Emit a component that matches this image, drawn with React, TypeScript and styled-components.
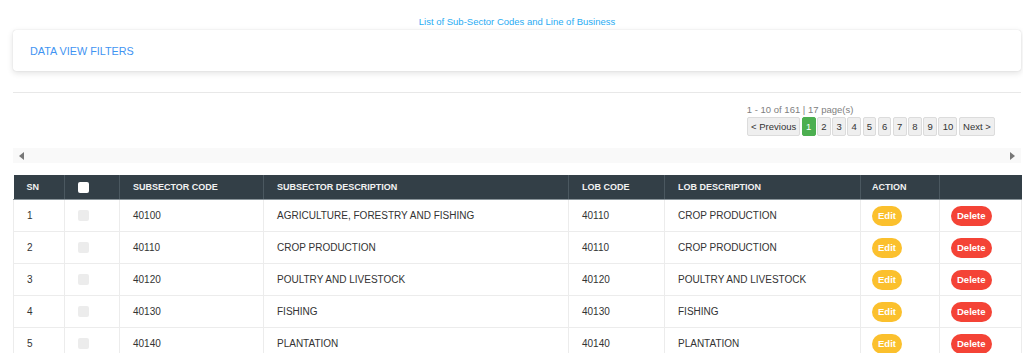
import React, { ReactElement } from "react";
import styled, { createGlobalStyle, css } from "styled-components";

const GlobalStyle = createGlobalStyle`
  html, body {
    margin: 0;
    padding: 0;
    background: #fff;
    overflow: hidden;
    font-family: "Liberation Sans", Arial, sans-serif;
  }
`;

const Page = styled.div`
  padding: 16px 2px 0 13px;
`;

const Title = styled.div`
  text-align: center;
  font-size: 9.5px;
  line-height: 11px;
  color: #29abf3;
  margin-bottom: 3px;
`;

const FilterCard = styled.div`
  height: 41px;
  display: flex;
  align-items: center;
  padding-left: 17px;
  border-radius: 3px;
  background: #fff;
  box-shadow: 0 2px 6px rgba(0, 0, 0, 0.12), 0 0 1px rgba(0, 0, 0, 0.2);
  color: #3f94f2;
  font-size: 10.8px;
`;

const Divider = styled.hr`
  margin: 21px 0 0;
  border: 0;
  border-top: 1px solid #e8e8e8;
`;

const PagerWrap = styled.div`
  display: flex;
  justify-content: flex-end;
  padding-right: 26px;
  margin-top: 11px;
`;

const Pager = styled.div`
  display: flex;
  flex-direction: column;
`;

const PageInfo = styled.div`
  font-size: 9.5px;
  line-height: 11px;
  color: #808080;
`;

const PageButtons = styled.div`
  display: flex;
  gap: 1.5px;
  margin-top: 2px;
`;

const PageButton = styled.button<{ $active?: boolean }>`
  height: 19px;
  padding: 0 3.2px;
  border: 1px solid #dcdcdc;
  border-radius: 2px;
  font-family: inherit;
  font-size: 9.5px;
  color: #333;
  background: #efefef;
  cursor: pointer;

  ${(p) =>
    p.$active &&
    css`
      background: #4caf50;
      border-color: #4caf50;
      color: #fff;
    `}
`;

const ScrollTrack = styled.div`
  margin-top: 12px;
  height: 15px;
  background: #f9f9f9;
  display: flex;
  align-items: center;
  justify-content: space-between;
  padding: 0 6px;
`;

const Arrow = styled.span<{ $dir: "left" | "right" }>`
  width: 0;
  height: 0;
  border-top: 4px solid transparent;
  border-bottom: 4px solid transparent;
  ${(p) =>
    p.$dir === "left"
      ? css`
          border-right: 5px solid #777;
        `
      : css`
          border-left: 5px solid #777;
        `}
`;

const Table = styled.table`
  margin-top: 12px;
  width: 100%;
  border-collapse: collapse;
  table-layout: fixed;
  font-size: 10px;
  color: #333;
`;

const HeadCell = styled.th<{ $tight?: boolean }>`
  height: 24px;
  padding: 0 12px 0 ${(p) => (p.$tight ? 11 : 13)}px;
  background: #333f47;
  color: #f2f2f2;
  font-size: 9px;
  font-weight: bold;
  text-align: left;
  border-left: 1px solid #4b5860;
  border-bottom: 1px solid #8a949a;

  &:first-child {
    border-left: 0;
  }
`;

const Cell = styled.td<{ $tight?: boolean }>`
  height: 31px;
  padding: 0 12px 0 ${(p) => (p.$tight ? 11 : 13)}px;
  border: 1px solid #ececec;
  white-space: nowrap;
`;

const Check = styled.input<{ $head?: boolean }>`
  appearance: none;
  display: block;
  margin: 0;
  width: 11px;
  height: 11px;
  border-radius: 2px;
  background: ${(p) => (p.$head ? "#fff" : "#ececec")};
`;

const Pill = styled.button<{ $kind: "edit" | "delete" }>`
  height: 20px;
  padding: 0 6px;
  border: 0;
  border-radius: 10px;
  font-family: inherit;
  font-size: 9.5px;
  font-weight: bold;
  color: #fff;
  background: ${(p) => (p.$kind === "edit" ? "#fbc02d" : "#f44336")};
  cursor: pointer;
`;

const columns = [
  { label: "SN", width: 51 },
  { label: "", width: 55 },
  { label: "SUBSECTOR CODE", width: 144 },
  { label: "SUBSECTOR DESCRIPTION", width: 305 },
  { label: "LOB CODE", width: 96 },
  { label: "LOB DESCRIPTION", width: 196 },
  { label: "ACTION", width: 79 },
  { label: "", width: 82 },
];

const rows = [
  ["40100", "AGRICULTURE, FORESTRY AND FISHING", "40110", "CROP PRODUCTION"],
  ["40110", "CROP PRODUCTION", "40110", "CROP PRODUCTION"],
  ["40120", "POULTRY AND LIVESTOCK", "40120", "POULTRY AND LIVESTOCK"],
  ["40130", "FISHING", "40130", "FISHING"],
  ["40140", "PLANTATION", "40140", "PLANTATION"],
];

const pages = [1, 2, 3, 4, 5, 6, 7, 8, 9, 10];

export default function App(): ReactElement {
  return (
    <Page>
      <GlobalStyle />
      <Title>List of Sub-Sector Codes and Line of Business</Title>
      <FilterCard>DATA VIEW FILTERS</FilterCard>
      <Divider />

      <PagerWrap>
        <Pager>
          <PageInfo>1 - 10 of 161 | 17 page(s)</PageInfo>
          <PageButtons>
            <PageButton>&lt; Previous</PageButton>
            {pages.map((n) => (
              <PageButton key={n} $active={n === 1}>
                {n}
              </PageButton>
            ))}
            <PageButton>Next &gt;</PageButton>
          </PageButtons>
        </Pager>
      </PagerWrap>

      <ScrollTrack>
        <Arrow $dir="left" />
        <Arrow $dir="right" />
      </ScrollTrack>

      <Table>
        <colgroup>
          {columns.map((c, i) => (
            <col key={i} style={{ width: c.width }} />
          ))}
        </colgroup>
        <thead>
          <tr>
            {columns.map((c, i) => (
              <HeadCell key={i} $tight={i >= 6}>
                {i === 1 ? <Check type="checkbox" $head /> : c.label}
              </HeadCell>
            ))}
          </tr>
        </thead>
        <tbody>
          {rows.map((r, i) => (
            <tr key={i}>
              <Cell>{i + 1}</Cell>
              <Cell>
                <Check type="checkbox" disabled />
              </Cell>
              <Cell>{r[0]}</Cell>
              <Cell>{r[1]}</Cell>
              <Cell>{r[2]}</Cell>
              <Cell>{r[3]}</Cell>
              <Cell $tight>
                <Pill $kind="edit">Edit</Pill>
              </Cell>
              <Cell $tight>
                <Pill $kind="delete">Delete</Pill>
              </Cell>
            </tr>
          ))}
        </tbody>
      </Table>
    </Page>
  );
}
